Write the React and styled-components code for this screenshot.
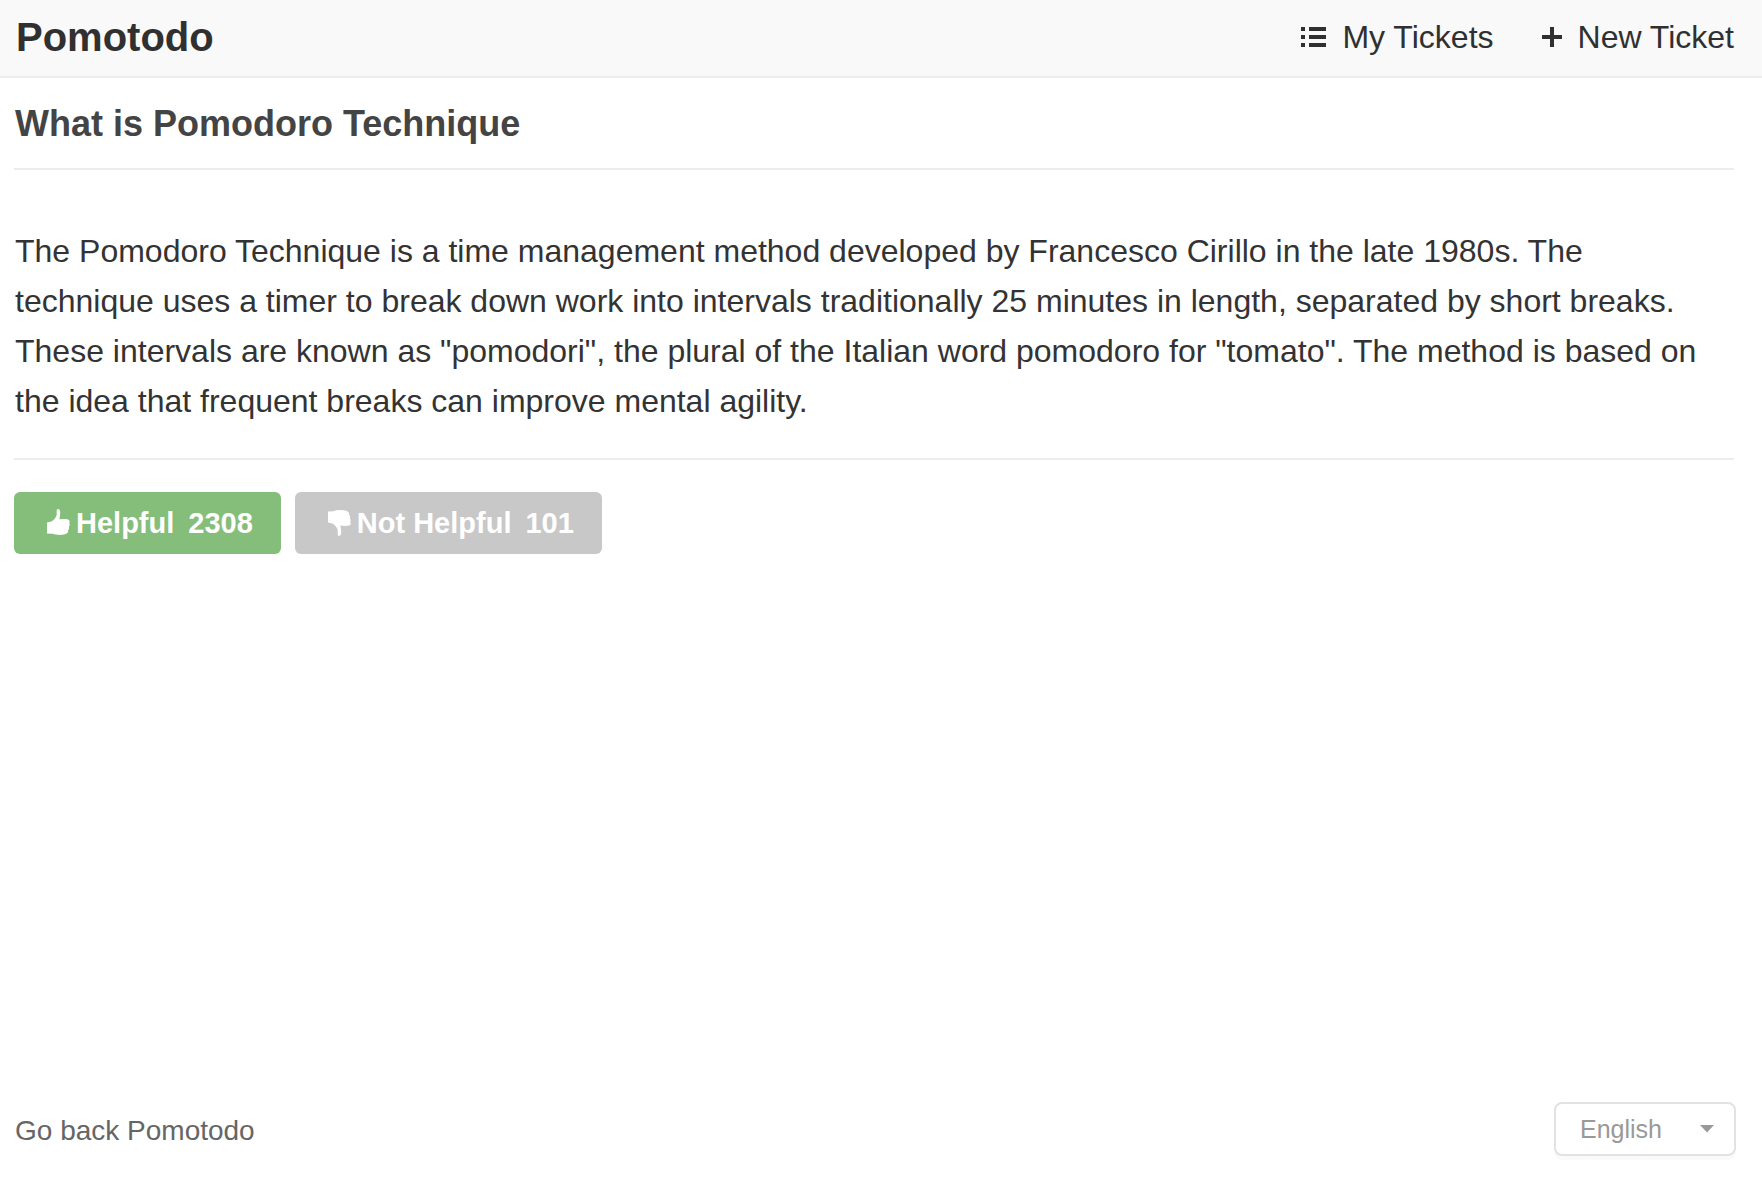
import React, { useState } from "react";
import styled, { createGlobalStyle } from "styled-components";

const GlobalStyle = createGlobalStyle`
  *, *::before, *::after { box-sizing: border-box; }
  body {
    margin: 0;
    background: #fff;
    color: #333;
    font-family: "Liberation Sans", Helvetica, Arial, sans-serif;
    font-size: 32px;
  }
`;

const Page = styled.div`
  min-height: 100vh;
  display: flex;
  flex-direction: column;
`;

const Header = styled.header`
  display: flex;
  align-items: center;
  justify-content: space-between;
  height: 78px;
  padding: 0 28px 2px 16px;
  background: #f9f9f9;
  border-bottom: 2px solid #ededed;
`;

const Brand = styled.a`
  color: #303030;
  font-size: 40px;
  font-weight: bold;
  line-height: 48px;
  text-decoration: none;
`;

const Nav = styled.nav`
  display: flex;
  gap: 48px;
`;

const NavLink = styled.a`
  display: flex;
  align-items: center;
  gap: 16px;
  color: #303030;
  line-height: 40px;
  text-decoration: none;
`;

const Article = styled.main`
  flex: 1;
  padding: 0 28px 0 14px;
`;

const Title = styled.h1`
  margin: 0;
  padding: 22px 12px 20px 1px;
  border-bottom: 2px solid #ededed;
  color: #444;
  font-size: 36px;
  line-height: 48px;
`;

const Body = styled.p`
  margin: 0;
  padding: 56px 12px 32px 1px;
  border-bottom: 2px solid #ededed;
  line-height: 50px;
`;

const Votes = styled.div`
  display: flex;
  gap: 14px;
  margin-top: 32px;
`;

const VoteButton = styled.button`
  display: flex;
  align-items: center;
  height: 62px;
  padding: 0 28px 0 32px;
  border: 0;
  border-radius: 6px;
  background: ${({ $positive }) => ($positive ? "#85be7b" : "#c8c8c8")};
  color: #fff;
  font: bold 29px/40px "Liberation Sans", Helvetica, Arial, sans-serif;
  cursor: pointer;

  svg { margin-right: 6px; }
`;

const Count = styled.span`
  margin-left: 14px;
`;

const Footer = styled.footer`
  display: flex;
  align-items: center;
  justify-content: space-between;
  padding: 0 26px 28px 15px;
`;

const BackLink = styled.a`
  padding-top: 4px;
  color: #666;
  font-size: 28px;
  line-height: 40px;
  text-decoration: none;
`;

const Language = styled.div`
  display: grid;
  align-items: center;

  > * { grid-area: 1 / 1; }
  > svg { justify-self: end; margin-right: 22px; pointer-events: none; }
`;

const Select = styled.select`
  appearance: none;
  width: 182px;
  height: 54px;
  padding: 0 48px 0 24px;
  border: 2px solid #e2e2e2;
  border-radius: 8px;
  background: #fff;
  box-shadow: 0 4px 0 #fafafa;
  color: #999;
  font: 25px/32px "Liberation Sans", Helvetica, Arial, sans-serif;
`;

const ListIcon = () => (
  <svg width="25" height="20" viewBox="0 0 25 20" fill="currentColor" aria-hidden="true">
    <path d="M0 0h4v4H0zM8 0h17v4H8zM0 8h4v4H0zM8 8h17v4H8zM0 16h4v4H0zM8 16h17v4H8z" />
  </svg>
);

const PlusIcon = () => (
  <svg width="20" height="20" viewBox="0 0 20 20" fill="currentColor" aria-hidden="true">
    <path d="M8 0h4v8h8v4h-8v8H8v-8H0V8h8z" />
  </svg>
);

const ThumbIcon = ({ down }) => (
  <svg width="24" height="28" viewBox="0 0 24 28" fill="currentColor" aria-hidden="true">
    <path
      transform={down ? "matrix(1 0 0 -1 0 28)" : "translate(0 -1)"}
      d="M1 14.5 5.500 13.500C8.500 11.500 10.300 9 10.800 6.500C10.600 3.300 10.300 1.200 11.900 1.100C14.200 1 14.600 4.500 14 7.500L13.400 11.500C16 11 20 10.800 22 11.500C24 12.200 24 14 23.200 15.100C24 16.500 23.800 18 22.800 18.800C23.500 20.200 23 21.600 22 22.200C22.500 24 21.500 25.500 19 26.200C15 27.300 10 27 6.500 25.800L1 25.600Z"
    />
  </svg>
);

const CaretIcon = () => (
  <svg width="14" height="8" viewBox="0 0 14 8" fill="#999" aria-hidden="true">
    <path d="M0 0h14L7 7.500z" />
  </svg>
);

export default function App() {
  const [language, setLanguage] = useState("en");

  return (
    <Page>
      <GlobalStyle />
      <Header>
        <Brand href="#home">Pomotodo</Brand>
        <Nav>
          <NavLink href="#tickets"><ListIcon />My Tickets</NavLink>
          <NavLink href="#new"><PlusIcon />New Ticket</NavLink>
        </Nav>
      </Header>
      <Article>
        <Title>What is Pomodoro Technique</Title>
        <Body>
          The Pomodoro Technique is a time management method developed by Francesco
          Cirillo in the late 1980s. The technique uses a timer to break down work
          into intervals traditionally 25 minutes in length, separated by short
          breaks. These intervals are known as "pomodori", the plural of the Italian
          word pomodoro for "tomato". The method is based on the idea that frequent
          breaks can improve mental agility.
        </Body>
        <Votes>
          <VoteButton type="button" $positive>
            <ThumbIcon />Helpful<Count>2308</Count>
          </VoteButton>
          <VoteButton type="button">
            <ThumbIcon down />Not Helpful<Count>101</Count>
          </VoteButton>
        </Votes>
      </Article>
      <Footer>
        <BackLink href="#back">Go back Pomotodo</BackLink>
        <Language>
          <Select
            aria-label="Language"
            value={language}
            onChange={(event) => setLanguage(event.target.value)}
          >
            <option value="en">English</option>
          </Select>
          <CaretIcon />
        </Language>
      </Footer>
    </Page>
  );
}
